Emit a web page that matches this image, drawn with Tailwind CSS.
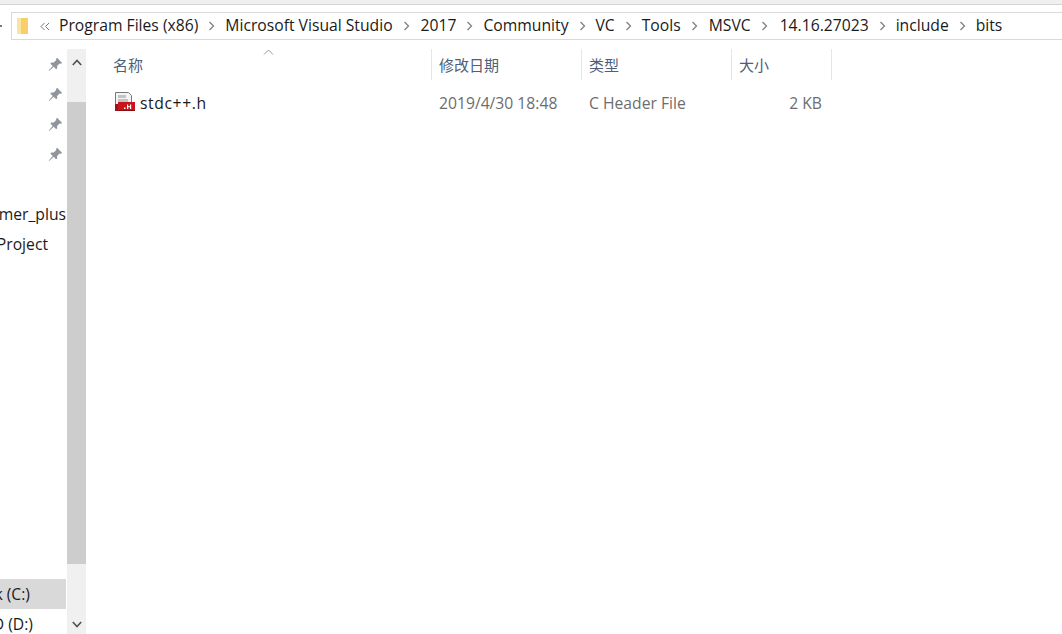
<!DOCTYPE html>
<html lang="en">
<head>
    <meta charset="UTF-8">
    <title>bits</title>
    <script src="https://cdn.jsdelivr.net/npm/@tailwindcss/browser@4"></script>
</head>
<body class="bg-white overflow-hidden">
<div class="w-[1062px] h-[634px] flex flex-col overflow-hidden text-[15.7px] leading-5 text-[#1a1a1a] font-['Open_Sans','Noto_Sans_CJK_SC',sans-serif]">
    <!-- Toolbar edge -->
    <div class="h-[5px] shrink-0 bg-[#f0f0f0] border-b border-[#d4d4d4]"></div>

    <!-- Address bar -->
    <div class="h-11 shrink-0 flex items-start pt-[7px] relative">
        <div class="w-[2px] h-[2px] bg-[#777] absolute left-0 top-[20px]"></div>
        <div class="ml-[11px] flex-1 h-[28px] flex items-center border border-[#d9d9d9] border-r-0 pb-[2px]">
            <svg class="ml-[4px] mt-[2px] w-[13px] h-[17px]" viewBox="0 0 13 17">
                <path d="M1 0h11v16H1z" fill="#f8cf6a"/>
                <path d="M1 0h4v16H1z" fill="#fbe3a0"/>
            </svg>
            <svg class="ml-[11px] mt-[2px] w-[10px] h-[9px]" viewBox="0 0 10 9" fill="none" stroke="#777" stroke-width="1">
                <path d="M4.500 1 1 4.500 4.500 8M9 1 5.500 4.500 9 8"/>
            </svg>
            <span class="ml-[9px]">Program Files (x86)</span>
            <svg class="ml-[10px] mt-[2px] w-[7px] h-[10px]" viewBox="0 0 7 10" fill="none" stroke="#808080" stroke-width="1.300"><path d="M1.500 1 5.500 5l-4 4"/></svg>
            <span class="ml-[10px]">Microsoft Visual Studio</span>
            <svg class="ml-[10px] mt-[2px] w-[7px] h-[10px]" viewBox="0 0 7 10" fill="none" stroke="#808080" stroke-width="1.300"><path d="M1.500 1 5.500 5l-4 4"/></svg>
            <span class="ml-[11px]">2017</span>
            <svg class="ml-[10px] mt-[2px] w-[7px] h-[10px]" viewBox="0 0 7 10" fill="none" stroke="#808080" stroke-width="1.300"><path d="M1.500 1 5.500 5l-4 4"/></svg>
            <span class="ml-[10px]">Community</span>
            <svg class="ml-[10px] mt-[2px] w-[7px] h-[10px]" viewBox="0 0 7 10" fill="none" stroke="#808080" stroke-width="1.300"><path d="M1.500 1 5.500 5l-4 4"/></svg>
            <span class="ml-[10px]">VC</span>
            <svg class="ml-[10px] mt-[2px] w-[7px] h-[10px]" viewBox="0 0 7 10" fill="none" stroke="#808080" stroke-width="1.300"><path d="M1.500 1 5.500 5l-4 4"/></svg>
            <span class="ml-[10px]">Tools</span>
            <svg class="ml-[10px] mt-[2px] w-[7px] h-[10px]" viewBox="0 0 7 10" fill="none" stroke="#808080" stroke-width="1.300"><path d="M1.500 1 5.500 5l-4 4"/></svg>
            <span class="ml-[11px]">MSVC</span>
            <svg class="ml-[10px] mt-[2px] w-[7px] h-[10px]" viewBox="0 0 7 10" fill="none" stroke="#808080" stroke-width="1.300"><path d="M1.500 1 5.500 5l-4 4"/></svg>
            <span class="ml-[12px]">14.16.27023</span>
            <svg class="ml-[10px] mt-[2px] w-[7px] h-[10px]" viewBox="0 0 7 10" fill="none" stroke="#808080" stroke-width="1.300"><path d="M1.500 1 5.500 5l-4 4"/></svg>
            <span class="ml-[10px]">include</span>
            <svg class="ml-[10px] mt-[2px] w-[7px] h-[10px]" viewBox="0 0 7 10" fill="none" stroke="#808080" stroke-width="1.300"><path d="M1.500 1 5.500 5l-4 4"/></svg>
            <span class="ml-[10px]">bits</span>
        </div>
    </div>

    <div class="flex-1 flex min-h-0">
        <!-- Navigation pane -->
        <div class="w-[67px] shrink-0 flex flex-col overflow-hidden">
            <div class="h-[30px] shrink-0 flex items-center justify-end pr-[4px]">
                <svg class="w-[15px] h-[15px]" viewBox="0 0 14 14" fill="#8f959b"><path d="M8.500.800 13.200 5.500l-1.300.7-1.100-.2-2.300 2.300.1 2.200-1 1-2.200-2.300L1 13l-.3-.3 3.700-4.400-2.200-2.200 1-1 2.200.1 2.300-2.300-.2-1.100z"/></svg>
            </div>
            <div class="h-[30px] shrink-0 flex items-center justify-end pr-[4px]">
                <svg class="w-[15px] h-[15px]" viewBox="0 0 14 14" fill="#8f959b"><path d="M8.500.800 13.200 5.500l-1.300.7-1.100-.2-2.300 2.300.1 2.200-1 1-2.200-2.300L1 13l-.3-.3 3.700-4.400-2.200-2.200 1-1 2.200.1 2.300-2.300-.2-1.100z"/></svg>
            </div>
            <div class="h-[30px] shrink-0 flex items-center justify-end pr-[4px]">
                <svg class="w-[15px] h-[15px]" viewBox="0 0 14 14" fill="#8f959b"><path d="M8.500.800 13.200 5.500l-1.300.7-1.100-.2-2.300 2.300.1 2.200-1 1-2.200-2.300L1 13l-.3-.3 3.700-4.400-2.200-2.200 1-1 2.200.1 2.300-2.300-.2-1.100z"/></svg>
            </div>
            <div class="h-[30px] shrink-0 flex items-center justify-end pr-[4px]">
                <svg class="w-[15px] h-[15px]" viewBox="0 0 14 14" fill="#8f959b"><path d="M8.500.800 13.200 5.500l-1.300.7-1.100-.2-2.300 2.300.1 2.200-1 1-2.200-2.300L1 13l-.3-.3 3.700-4.400-2.200-2.200 1-1 2.200.1 2.300-2.300-.2-1.100z"/></svg>
            </div>
            <div class="h-[30px] shrink-0"></div>
            <div class="h-[30px] shrink-0 flex items-center justify-end pr-[1px] whitespace-nowrap">Customer_plus</div>
            <div class="h-[30px] shrink-0 flex items-center justify-end pr-[19px] whitespace-nowrap">Project</div>
            <div class="h-[320px] shrink-0"></div>
            <div class="h-[30px] w-[66px] shrink-0 flex items-center justify-end pr-[36px] whitespace-nowrap bg-[#d9d9d9]">Disk (C:)</div>
            <div class="h-[30px] shrink-0 flex items-center justify-end pr-[34px] whitespace-nowrap">HDD (D:)</div>
        </div>

        <!-- Scrollbar -->
        <div class="w-[19px] shrink-0 flex flex-col items-stretch bg-[#f0f0f0]">
            <div class="h-[53px] shrink-0 pt-[10px] flex justify-center">
                <svg class="w-[10px] h-[7px]" viewBox="0 0 10 7" fill="none" stroke="#505050" stroke-width="1.600"><path d="M.8 6 5 1.500 9.200 6"/></svg>
            </div>
            <div class="h-[462px] shrink-0 bg-[#cdcdcd]"></div>
            <div class="flex-1 flex justify-center items-end pb-[6px]">
                <svg class="w-[10px] h-[7px]" viewBox="0 0 10 7" fill="none" stroke="#505050" stroke-width="1.600"><path d="M.8 1 5 5.500 9.200 1"/></svg>
            </div>
        </div>

        <!-- File list -->
        <div class="flex-1 min-w-0 relative">
            <div class="h-[31px] flex text-[15px] text-[#4c607a]">
                <div class="w-[346px] pl-[27px] flex items-center border-r border-[#e5e5e5]">名称</div>
                <div class="w-[150px] pl-[7px] flex items-center border-r border-[#e5e5e5]">修改日期</div>
                <div class="w-[150px] pl-[7px] flex items-center border-r border-[#e5e5e5]">类型</div>
                <div class="w-[100px] pl-[7px] flex items-center border-r border-[#e5e5e5]">大小</div>
            </div>
            <svg class="absolute left-[177px] top-0 w-[11px] h-[6px]" viewBox="0 0 11 6" fill="none" stroke="#9a9a9a" stroke-width="1"><path d="M1 5.500 5.500 1 10 5.500"/></svg>
            <div class="mt-[8px] h-[30px] flex items-center text-[#6d6d6d]">
                <div class="w-[346px] pl-[29px] flex items-center text-[#1a1a1a]">
                    <svg class="-mt-[2px] w-[20px] h-[20px] shrink-0" viewBox="0 0 20 20">
                        <path d="M.500.500h13l3 3v9H.500z" fill="#f4f4f4" stroke="#777"/>
                        <path d="M3 3h8v3H3zM3 7h10v3H3z" fill="#c4c4c4"/>
                        <path d="M3 10h17v9H3z" fill="#c8141c"/>
                        <path d="M0 12h3v7H0z" fill="#a01218"/>
                        <path d="M3 18h17v1H3z" fill="#8c0c12"/>
                        <path d="M9 15.500h1.500V17H9zM12 12.500h1.200v4.500H12zM15 12.500h1.200v4.500H15zM13 14.300h2v1h-2z" fill="#fff"/>
                    </svg>
                    <span class="ml-[5px] tracking-[0.6px]">stdc++.h</span>
                </div>
                <div class="w-[150px] pl-[7px]">2019/4/30 18:48</div>
                <div class="w-[150px] pl-[7px]">C Header File</div>
                <div class="w-[100px] pr-[10px] text-right">2 KB</div>
            </div>
        </div>
    </div>
</div>
</body>
</html>
